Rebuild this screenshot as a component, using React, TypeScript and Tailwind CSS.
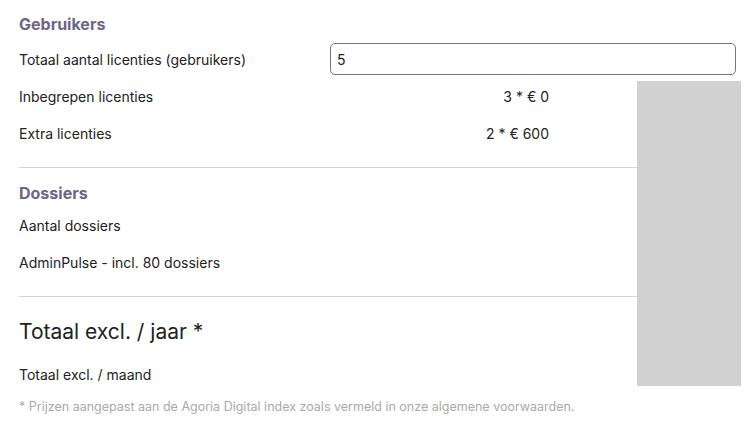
import * as React from "react";

function Row({ label, value, className }: { label: string; value?: string; className?: string }) {
  return (
    <div className={`flex leading-[20px] text-[14px] text-[#222] ${className ?? ""}`}>
      <div className="w-[311px] shrink-0">{label}</div>
      {value && <div className="w-[219px] text-right">{value}</div>}
    </div>
  );
}

export default function App() {
  return (
    <div
      className="relative h-[421px] w-[748px] overflow-hidden bg-white pl-[19px] pr-[12px] pt-[13px]"
      style={{ fontFamily: "Inter, 'Noto Sans', sans-serif" }}
    >
      <h2 className="text-[16px] font-bold leading-[22px] text-[#6b6687]">Gebruikers</h2>
      <div className="mt-[8px] flex h-[32px] items-center text-[14px] text-[#222]">
        <div className="w-[311px] shrink-0">Totaal aantal licenties (gebruikers)</div>
        <input
          type="text"
          defaultValue="5"
          className="h-[32px] flex-1 rounded-[5px] border border-[#767676] px-[6px] text-[14px] text-[#222] outline-none"
        />
      </div>
      <Row className="mt-[12px]" label="Inbegrepen licenties" value="3 * € 0" />
      <Row className="mt-[17px]" label="Extra licenties" value="2 * € 600" />
      <div className="mt-[23px] border-t border-[#d4d4d4]" />

      <h2 className="mt-[14px] text-[16px] font-bold leading-[22px] text-[#6b6687]">Dossiers</h2>
      <Row className="mt-[12px]" label="Aantal dossiers" />
      <Row className="mt-[17px]" label="AdminPulse - incl. 80 dossiers" />
      <div className="mt-[23px] border-t border-[#d4d4d4]" />

      <div className="mt-[21px] text-[21px] leading-[28px] text-[#222]">Totaal excl. / jaar *</div>
      <Row className="mt-[19px]" label="Totaal excl. / maand" />
      <p className="mt-[14px] text-[12.5px] leading-[16px] text-[#aaaaaa]">
        * Prijzen aangepast aan de Agoria Digital index zoals vermeld in onze algemene voorwaarden.
      </p>

      <div className="absolute left-[637px] top-[81px] h-[305px] w-[104px] bg-[#d1d1d1]" />
    </div>
  );
}
